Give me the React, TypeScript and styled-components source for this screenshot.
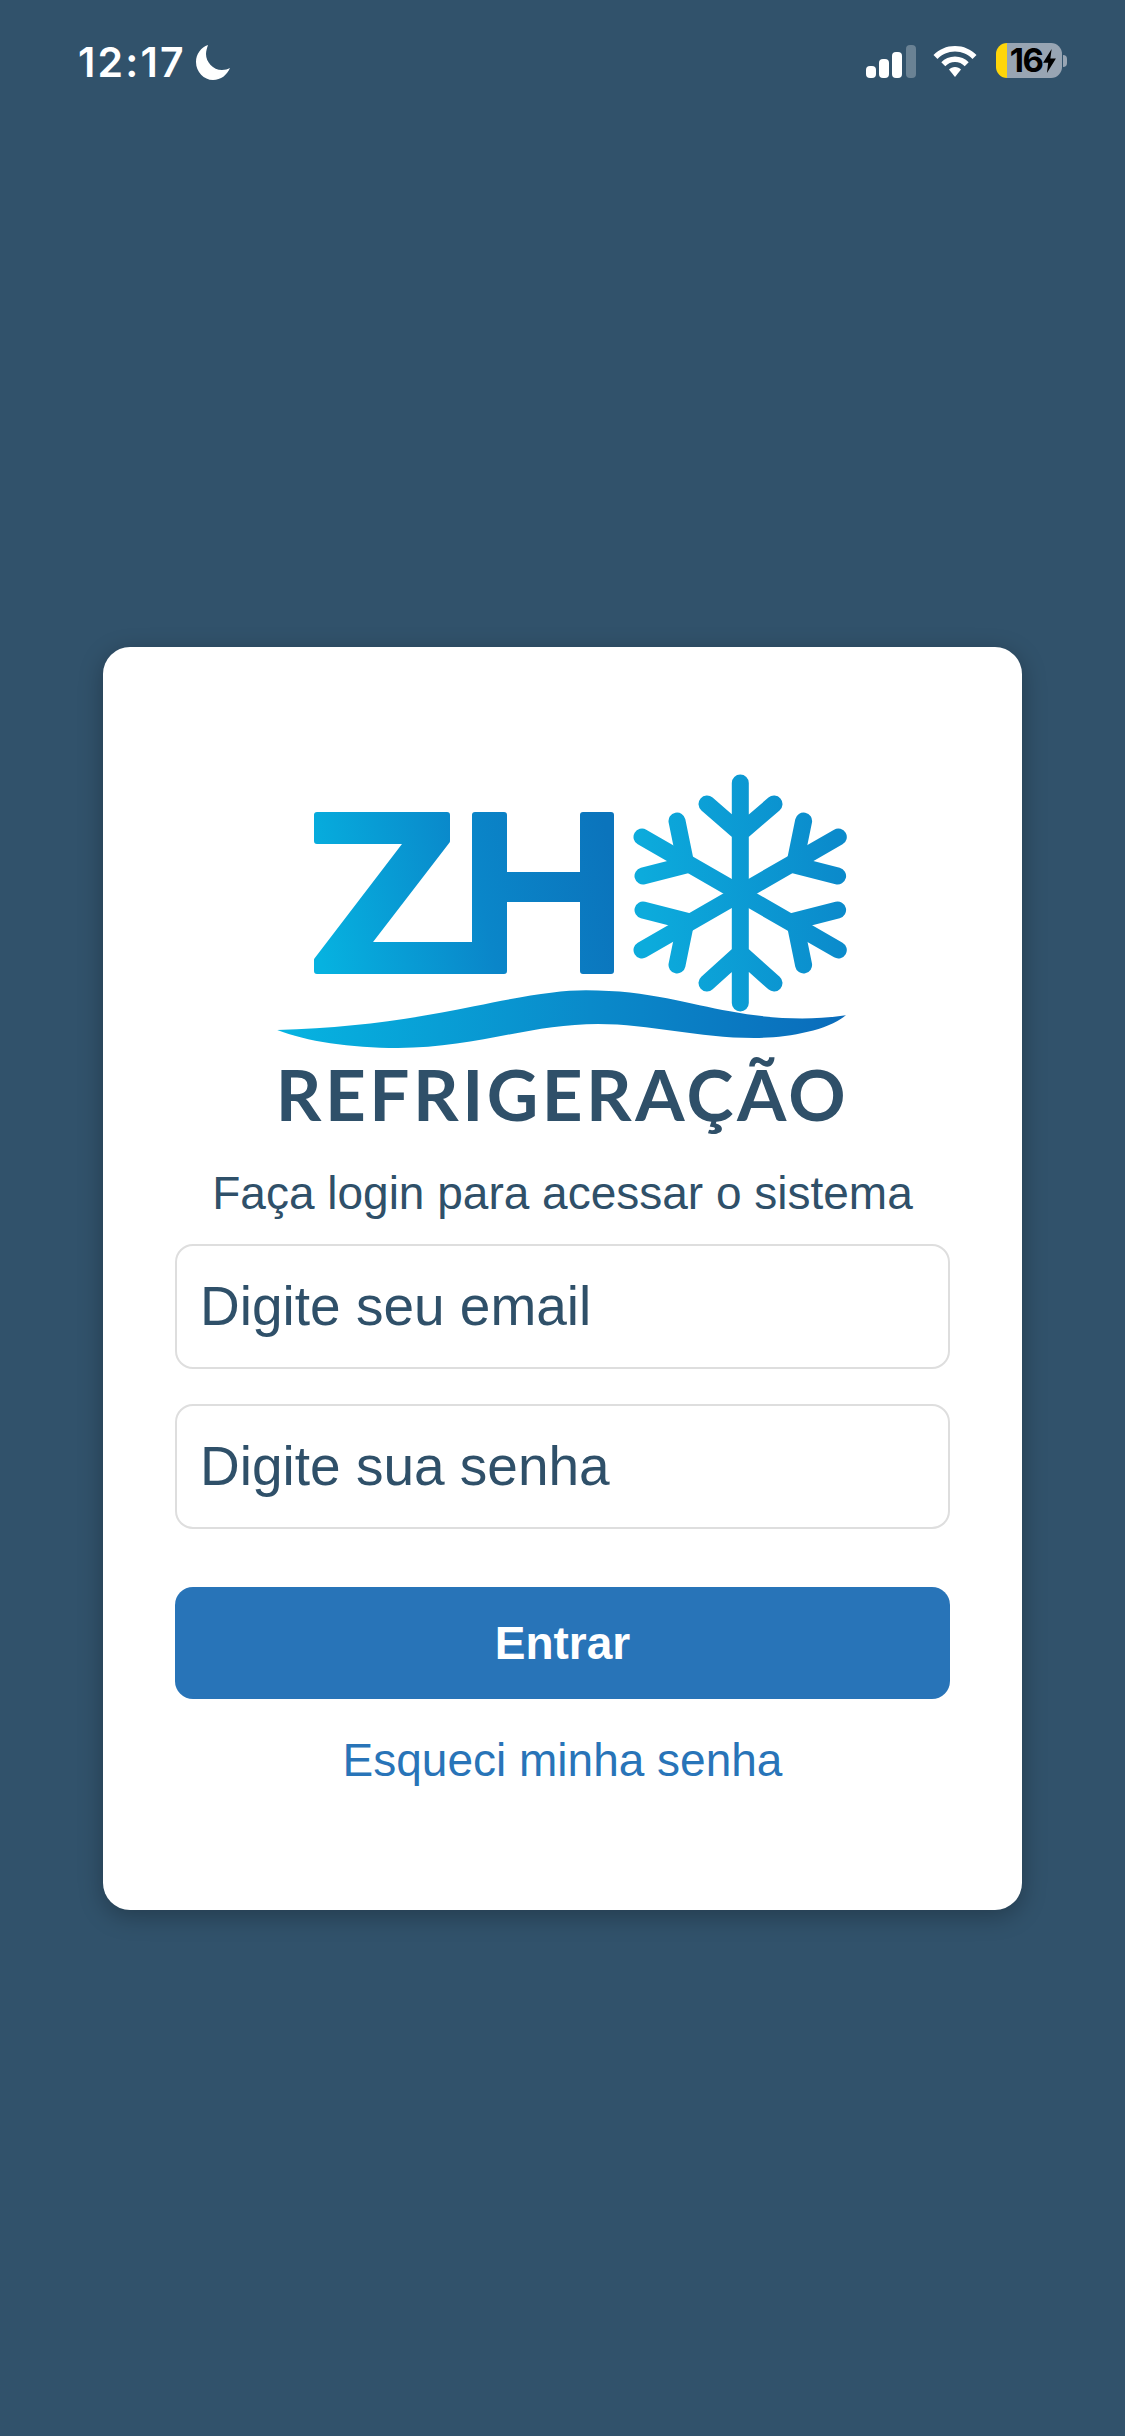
import React from 'react';
import styled, { createGlobalStyle } from 'styled-components';

const GlobalStyle = createGlobalStyle`
  html, body {
    margin: 0;
    padding: 0;
    background: #31526b;
  }
  * {
    box-sizing: border-box;
  }
`;

const Page = styled.div`
  width: 1125px;
  height: 2436px;
  background: #31526b;
  display: flex;
  flex-direction: column;
  font-family: "Liberation Sans", Arial, sans-serif;
`;

const StatusBar = styled.div`
  height: 120px;
  flex: none;
  display: flex;
  justify-content: space-between;
  align-items: flex-start;
  padding: 43px 58px 0 78px;
`;

const StatusLeft = styled.div`
  display: flex;
  align-items: center;
  gap: 10px;
`;

const Time = styled.span`
  font-family: Inter, sans-serif;
  font-weight: 600;
  font-size: 41px;
  line-height: 38px;
  color: #fff;
  letter-spacing: 2.2px;
`;

const StatusRight = styled.div`
  display: flex;
  align-items: flex-end;
  height: 35px;
`;

const WifiIcon = styled.svg`
  margin: 0 0 1px 17px;
`;

const Battery = styled.div`
  width: 66px;
  height: 35px;
  margin-left: 19px;
  border-radius: 11px;
  background: linear-gradient(to right, #ffd60a 0 11px, #98a5b3 11px);
  display: flex;
  align-items: center;
  justify-content: center;
  gap: 1px;
  font-family: Inter, sans-serif;
  font-weight: 700;
  font-size: 33px;
  line-height: 35px;
  letter-spacing: -1.5px;
  color: #000;
  padding-left: 8px;
`;

const BatteryNub = styled.div`
  width: 4px;
  height: 12px;
  margin: 0 0 11px 1px;
  border-radius: 0 4px 4px 0;
  background: #98a5b3;
`;

const Main = styled.main`
  flex: 1;
  display: flex;
  align-items: center;
  padding: 0 103px;
`;

const Card = styled.div`
  width: 100%;
  height: 1263px;
  background: #fff;
  border-radius: 27px;
  box-shadow: 0 6px 24px rgba(0, 0, 0, 0.28);
  padding: 126px 72px 0;
  display: flex;
  flex-direction: column;
  align-items: center;
`;

const LogoMark = styled.svg`
  display: block;
  width: 578px;
  height: 277px;
  margin-left: 1px;
`;

const LogoName = styled.div`
  margin-top: 6px;
  font-family: Lato, sans-serif;
  font-weight: 700;
  font-size: 71px;
  line-height: 76px;
  letter-spacing: 3.5px;
  color: #2f5069;
  white-space: nowrap;
`;

const Subtitle = styled.p`
  margin: 34px 0 0;
  font-size: 46px;
  line-height: 54px;
  color: #2f5069;
  white-space: nowrap;
`;

const Form = styled.form`
  width: 100%;
  margin-top: 24px;
  display: flex;
  flex-direction: column;
`;

const Input = styled.input`
  width: 100%;
  height: 125px;
  margin-bottom: 35px;
  padding: 0 23px;
  border: 2px solid #dedede;
  border-radius: 18px;
  background: #fff;
  font-family: inherit;
  font-size: 55px;
  color: #2f5069;
  outline: none;

  &::placeholder {
    color: #2f5069;
    opacity: 1;
  }
`;

const Button = styled.button`
  width: 100%;
  height: 112px;
  margin-top: 23px;
  border: 0;
  border-radius: 18px;
  background: #2874b8;
  color: #fff;
  font-family: inherit;
  font-weight: 700;
  font-size: 46px;
`;

const ForgotLink = styled.a`
  align-self: center;
  margin-top: 34px;
  font-size: 46px;
  line-height: 54px;
  color: #2874b8;
  text-decoration: none;
`;

const Moon = () => (
  <svg width="34" height="35" viewBox="0 0 34 35">
    <path d="M12 0 C5 2.500 0 9 0 17 C0 27 8 35 17 35 C25 35 31 30 34 23 C32 24 29 25 26 25 C17 25 10 17 10 9 C10 6 11 3 12 0 Z" fill="#fff" />
  </svg>
);

const Signal = () => (
  <svg width="50" height="33" viewBox="0 0 50 33">
    <rect x="0" y="21" width="10" height="12" rx="4" fill="#fff" />
    <rect x="13" y="14" width="10" height="19" rx="4" fill="#fff" />
    <rect x="26" y="7" width="10" height="26" rx="4" fill="#fff" />
    <rect x="40" y="0" width="10" height="33" rx="4" fill="#fff" fillOpacity="0.28" />
  </svg>
);

const Wifi = () => (
  <WifiIcon width="44" height="31" viewBox="0 0 44 31">
    <path d="M22 0 C13.500 0 6 3.400 0.500 9 L4.500 13 C9 8.400 15 5.600 22 5.600 C29 5.600 35 8.400 39.500 13 L43.500 9 C38 3.400 30.500 0 22 0 Z" fill="#fff" />
    <path d="M22 10.500 C16.500 10.500 11.800 12.700 8.300 16.200 L12.300 20.200 C14.800 17.700 18.200 16.100 22 16.100 C25.800 16.100 29.200 17.700 31.700 20.200 L35.700 16.200 C32.200 12.700 27.500 10.500 22 10.500 Z" fill="#fff" />
    <path d="M22 21 C19.500 21 17.500 22 16 23.500 L22 31 L28 23.500 C26.500 22 24.500 21 22 21 Z" fill="#fff" />
  </WifiIcon>
);

const Bolt = () => (
  <svg width="13" height="24" viewBox="0 0 15 28">
    <path d="M10 0 L0 16 H6 L4.500 28 L15 11 H8.500 Z" fill="#000" />
  </svg>
);

const Logo = () => (
  <LogoMark viewBox="0 0 578 277">
    <defs>
      <linearGradient id="zh" gradientUnits="userSpaceOnUse" x1="40" y1="160" x2="340" y2="90">
        <stop offset="0" stopColor="#06b2e0" />
        <stop offset="0.55" stopColor="#0a86c9" />
        <stop offset="1" stopColor="#0b74bc" />
      </linearGradient>
      <linearGradient id="flake" gradientUnits="userSpaceOnUse" x1="370" y1="130" x2="568" y2="110">
        <stop offset="0" stopColor="#0cabdc" />
        <stop offset="1" stopColor="#0b8acb" />
      </linearGradient>
      <linearGradient id="wave" x1="0" y1="0" x2="1" y2="0">
        <stop offset="0" stopColor="#06b4e1" />
        <stop offset="0.55" stopColor="#0a8aca" />
        <stop offset="1" stopColor="#0a6cbb" />
      </linearGradient>
    </defs>
    <path
      d="M43 42 H173 V68 L93 172 H201 V42 H230 V102 H309 V42 H337 V198 H309 V126 H230 V198 H43 V187 L134 68 H43 Z"
      fill="url(#zh)"
      stroke="url(#zh)"
      strokeWidth="6"
      strokeLinejoin="round"
    />
    <g stroke="url(#flake)" fill="none" strokeLinecap="round">
      <path
        strokeWidth="17"
        d="M466.300 10 V230 M433 31 L466.300 60 L500 31 M433 210 L466.300 180 L500 210"
      />
      <path strokeWidth="17" d="M368 64 L564.300 177 M368 177 L564.300 64" />
      <path
        strokeWidth="17"
        d="M403 48 L412 92 L369 103 M529.600 48 L520.600 92 L563.600 103 M369 137 L412 148 L403 192 M563.600 137 L520.600 148 L529.600 192"
      />
    </g>
    <g transform="translate(-24 -21.670) scale(0.4 0.3333)">
      <path
        d="M68 836 C250 830 400 805 560 765 C680 735 770 717 840 717 C1000 717 1100 760 1200 780 C1300 803 1400 808 1490 792 C1440 840 1340 860 1260 860 C1120 860 1000 818 870 818 C700 818 560 890 370 890 C250 890 140 870 68 836 Z"
        fill="url(#wave)"
      />
    </g>
  </LogoMark>
);

export default function App() {
  return (
    <Page>
      <GlobalStyle />
      <StatusBar>
        <StatusLeft>
          <Time>12:17</Time>
          <Moon />
        </StatusLeft>
        <StatusRight>
          <Signal />
          <Wifi />
          <Battery>
            16
            <Bolt />
          </Battery>
          <BatteryNub />
        </StatusRight>
      </StatusBar>
      <Main>
        <Card>
          <Logo />
          <LogoName>REFRIGERAÇÃO</LogoName>
          <Subtitle>Faça login para acessar o sistema</Subtitle>
          <Form onSubmit={(e) => e.preventDefault()}>
            <Input type="email" placeholder="Digite seu email" />
            <Input type="password" placeholder="Digite sua senha" />
            <Button type="submit">Entrar</Button>
            <ForgotLink href="#">Esqueci minha senha</ForgotLink>
          </Form>
        </Card>
      </Main>
    </Page>
  );
}
